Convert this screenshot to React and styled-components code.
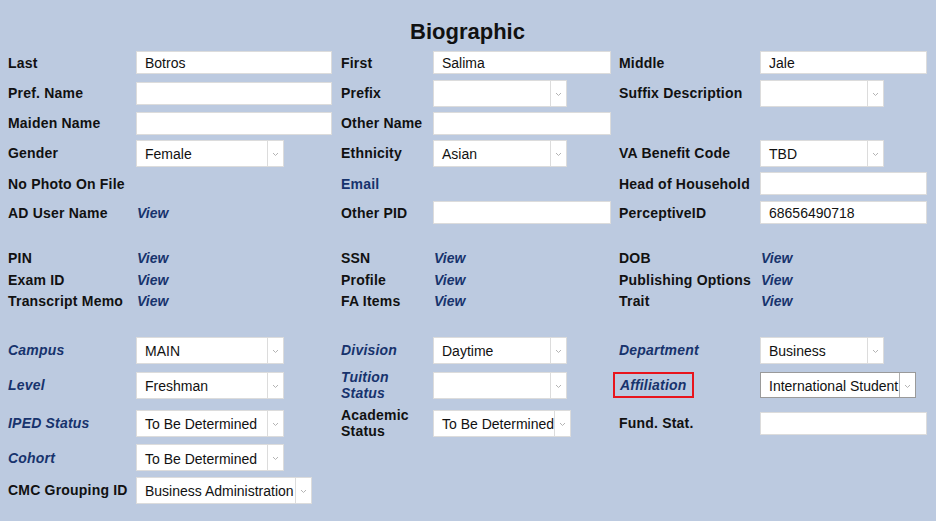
import styled, { createGlobalStyle } from 'styled-components'

const GlobalStyle = createGlobalStyle`
  html, body {
    margin: 0;
    padding: 0;
    background: #bccae0;
  }
  body {
    font-family: "Liberation Sans", Arial, sans-serif;
    color: #111;
  }
`

const Page = styled.div`
  width: 936px;
  height: 521px;
  box-sizing: border-box;
  padding: 0 9px 0 8px;
  background: #bccae0;
  overflow: hidden;
`

const Title = styled.h1`
  margin: 0;
  height: 47px;
  padding-top: 19px;
  box-sizing: border-box;
  text-align: center;
  font-size: 22px;
  font-weight: bold;
  line-height: 26px;
  color: #111;
`

const Row = styled.div`
  display: grid;
  grid-template-columns: 128px 205px 92px 186px 141px 1fr;
  align-items: center;
  height: ${p => p.$h}px;
`

const Spacer = styled.div`
  height: ${p => p.$h}px;
`

const Label = styled.div`
  font-size: 14px;
  font-weight: bold;
  line-height: 16px;
  letter-spacing: 0.2px;
  color: ${p => (p.$blue ? '#17336d' : '#111')};
  font-style: ${p => (p.$italic ? 'italic' : 'normal')};
`

const Boxed = styled.span`
  display: inline-block;
  border: 2px solid #e8141c;
  padding: 3px 5px 3px 5px;
  margin-left: -6px;
`

const ViewLink = styled.a`
  font-size: 14px;
  font-weight: bold;
  font-style: italic;
  color: #17336d;
  text-decoration: none;
  padding-left: 1px;
`

const TextBox = styled.input`
  box-sizing: border-box;
  width: ${p => p.$w}px;
  height: 23px;
  border: 1px solid #dcdcdc;
  background: #fff;
  padding: 0 0 0 8px;
  font-family: "Liberation Sans", Arial, sans-serif;
  font-size: 14px;
  color: #111;
  outline: none;
`

const SelectBox = styled.div`
  box-sizing: border-box;
  display: flex;
  width: ${p => p.$w}px;
  height: ${p => (p.$focus ? 26 : 27)}px;
  border: 1px solid ${p => (p.$focus ? '#9a9a9a' : '#dcdcdc')};
  background: #fff;
`

const SelectValue = styled.div`
  flex: 1;
  display: flex;
  align-items: center;
  padding: 2px 0 0 8px;
  font-size: 14px;
  white-space: nowrap;
  overflow: hidden;
  color: #111;
`

const SelectArrow = styled.div`
  width: 15px;
  flex: none;
  display: flex;
  align-items: center;
  justify-content: center;
  border-left: 1px solid ${p => (p.$focus ? '#b0b0b0' : '#dcdcdc')};
  padding-top: 2px;
`

function Chevron() {
  return (
    <svg width="7" height="5" viewBox="0 0 7 5">
      <polyline points="1,1 3.5,3.5 6,1" fill="none" stroke="#b4b4b4" strokeWidth="1" />
    </svg>
  )
}

function Select({ value, w, focus }) {
  return (
    <SelectBox $w={w} $focus={focus}>
      <SelectValue>{value}</SelectValue>
      <SelectArrow $focus={focus}><Chevron /></SelectArrow>
    </SelectBox>
  )
}

function Text({ value = '', w }) {
  return <TextBox $w={w} defaultValue={value} readOnly />
}

function View() {
  return <ViewLink href="#">View</ViewLink>
}

export default function App() {
  return (
    <Page>
      <GlobalStyle />
      <Title>Biographic</Title>

      <Row $h={31}>
        <Label>Last</Label>
        <Text w={196} value="Botros" />
        <Label>First</Label>
        <Text w={178} value="Salima" />
        <Label>Middle</Label>
        <Text w={167} value="Jale" />
      </Row>
      <Row $h={30}>
        <Label>Pref. Name</Label>
        <Text w={196} />
        <Label>Prefix</Label>
        <Select w={134} value="" />
        <Label>Suffix Description</Label>
        <Select w={124} value="" />
      </Row>
      <Row $h={30}>
        <Label>Maiden Name</Label>
        <Text w={196} />
        <Label>Other Name</Label>
        <Text w={178} />
        <div />
        <div />
      </Row>
      <Row $h={30}>
        <Label>Gender</Label>
        <Select w={148} value="Female" />
        <Label>Ethnicity</Label>
        <Select w={134} value="Asian" />
        <Label>VA Benefit Code</Label>
        <Select w={124} value="TBD" />
      </Row>
      <Row $h={31}>
        <Label>No Photo On File</Label>
        <div />
        <Label $blue>Email</Label>
        <div />
        <Label>Head of Household</Label>
        <Text w={167} />
      </Row>
      <Row $h={27}>
        <Label>AD User Name</Label>
        <div><View /></div>
        <Label>Other PID</Label>
        <Text w={178} />
        <Label>PerceptiveID</Label>
        <Text w={167} value="68656490718" />
      </Row>

      <Spacer $h={21} />

      <Row $h={22}>
        <Label>PIN</Label>
        <div><View /></div>
        <Label>SSN</Label>
        <div><View /></div>
        <Label>DOB</Label>
        <div><View /></div>
      </Row>
      <Row $h={21}>
        <Label>Exam ID</Label>
        <div><View /></div>
        <Label>Profile</Label>
        <div><View /></div>
        <Label>Publishing Options</Label>
        <div><View /></div>
      </Row>
      <Row $h={21}>
        <Label>Transcript Memo</Label>
        <div><View /></div>
        <Label>FA Items</Label>
        <div><View /></div>
        <Label>Trait</Label>
        <div><View /></div>
      </Row>

      <Spacer $h={24} />

      <Row $h={30}>
        <Label $blue $italic>Campus</Label>
        <Select w={148} value="MAIN" />
        <Label $blue $italic>Division</Label>
        <Select w={134} value="Daytime" />
        <Label $blue $italic>Department</Label>
        <Select w={124} value="Business" />
      </Row>
      <Row $h={40}>
        <Label $blue $italic>Level</Label>
        <Select w={148} value="Freshman" />
        <Label $blue $italic>Tuition<br />Status</Label>
        <Select w={134} value="" />
        <Label $blue $italic><Boxed>Affiliation</Boxed></Label>
        <Select w={156} value="International Student" focus />
      </Row>
      <Row $h={36}>
        <Label $blue $italic>IPED Status</Label>
        <Select w={148} value="To Be Determined" />
        <Label>Academic<br />Status</Label>
        <Select w={138} value="To Be Determined" />
        <Label>Fund. Stat.</Label>
        <Text w={167} />
      </Row>
      <Row $h={33}>
        <Label $blue $italic>Cohort</Label>
        <Select w={148} value="To Be Determined" />
        <div />
        <div />
        <div />
        <div />
      </Row>
      <Row $h={32}>
        <Label>CMC Grouping ID</Label>
        <Select w={176} value="Business Administration" />
        <div />
        <div />
        <div />
        <div />
      </Row>
    </Page>
  )
}
